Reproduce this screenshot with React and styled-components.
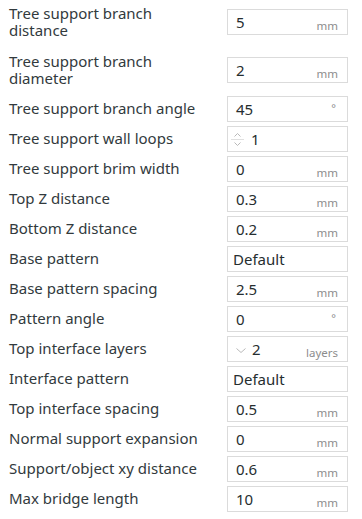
import React from 'react';
import styled, { createGlobalStyle } from 'styled-components';

const GlobalStyle = createGlobalStyle`
  html, body {
    margin: 0;
    padding: 0;
    background: #ffffff;
  }
  body {
    font-family: "Noto Sans", "Liberation Sans", sans-serif;
  }
`;

const Panel = styled.div`
  width: 362px;
  height: 519px;
  box-sizing: border-box;
  padding: 0 14px 0 9px;
  display: flex;
  flex-direction: column;
  gap: 4px;
  background: #fff;
`;

const Row = styled.div`
  display: flex;
  align-items: center;
  justify-content: space-between;
  min-height: ${p => (p.$tall ? '44px' : '26px')};
`;

const Label = styled.div`
  width: 200px;
  font-size: 15px;
  line-height: 17px;
  color: #323a3d;
  margin-top: -1px;
`;

const Field = styled.div`
  box-sizing: border-box;
  width: 121px;
  height: 26px;
  border: 1px solid #dbdbdb;
  display: flex;
  align-items: center;
  padding: ${p => (p.$combo ? '0 0 0 5px' : '0 9px 0 8px')};
  color: #262e30;
  font-size: 15px;
`;

const Value = styled.span`
  flex: 1;
  line-height: 24px;
`;

const Unit = styled.span`
  font-size: 11.5px;
  color: #8d8d8d;
  margin-top: 6px;
`;

const Degree = styled.span`
  font-size: 11px;
  color: #8d8d8d;
  align-self: flex-start;
  margin-top: 3px;
  margin-right: 2px;
`;

const SpinBox = styled.div`
  width: 14px;
  margin-right: 7px;
  margin-left: -6px;
  display: flex;
  flex-direction: column;
  align-items: center;
`;

const SpinDivider = styled.div`
  width: 13px;
  height: 1px;
  background: #e0e0e0;
  margin: 2px 0;
`;

const Chevron = ({ up, width = 7, height = 4 }) => (
  <svg width={width} height={height} viewBox={`0 0 ${width} ${height}`} fill="none">
    <path
      d={up ? `M0.5 ${height - 0.5} L${width / 2} 0.5 L${width - 0.5} ${height - 0.5}` : `M0.5 0.5 L${width / 2} ${height - 0.5} L${width - 0.5} 0.5`}
      stroke="#b9b9b9"
      strokeWidth="1"
    />
  </svg>
);

const DropMark = styled.span`
  display: flex;
  margin-right: 6px;
  margin-top: 2px;
`;

const rows = [
  { label: 'Tree support branch distance', value: '5', unit: 'mm', tall: true },
  { label: 'Tree support branch diameter', value: '2', unit: 'mm', tall: true },
  { label: 'Tree support branch angle', value: '45', unit: '°' },
  { label: 'Tree support wall loops', value: '1', kind: 'spin' },
  { label: 'Tree support brim width', value: '0', unit: 'mm' },
  { label: 'Top Z distance', value: '0.3', unit: 'mm' },
  { label: 'Bottom Z distance', value: '0.2', unit: 'mm' },
  { label: 'Base pattern', value: 'Default', kind: 'combo' },
  { label: 'Base pattern spacing', value: '2.5', unit: 'mm' },
  { label: 'Pattern angle', value: '0', unit: '°' },
  { label: 'Top interface layers', value: '2', unit: 'layers', kind: 'drop' },
  { label: 'Interface pattern', value: 'Default', kind: 'combo' },
  { label: 'Top interface spacing', value: '0.5', unit: 'mm' },
  { label: 'Normal support expansion', value: '0', unit: 'mm' },
  { label: 'Support/object xy distance', value: '0.6', unit: 'mm' },
  { label: 'Max bridge length', value: '10', unit: 'mm' },
];

const SettingField = ({ value, unit, kind }) => {
  if (kind === 'combo') {
    return (
      <Field $combo>
        <Value>{value}</Value>
      </Field>
    );
  }
  return (
    <Field>
      {kind === 'spin' && (
        <SpinBox>
          <Chevron up />
          <SpinDivider />
          <Chevron />
        </SpinBox>
      )}
      {kind === 'drop' && (
        <DropMark>
          <Chevron width={10} height={5} />
        </DropMark>
      )}
      <Value>{value}</Value>
      {unit === '°' ? <Degree>°</Degree> : unit && <Unit>{unit}</Unit>}
    </Field>
  );
};

export default function App() {
  return (
    <>
      <GlobalStyle />
      <Panel>
        {rows.map(r => (
          <Row key={r.label} $tall={r.tall}>
            <Label>{r.label}</Label>
            <SettingField value={r.value} unit={r.unit} kind={r.kind} />
          </Row>
        ))}
      </Panel>
    </>
  );
}
